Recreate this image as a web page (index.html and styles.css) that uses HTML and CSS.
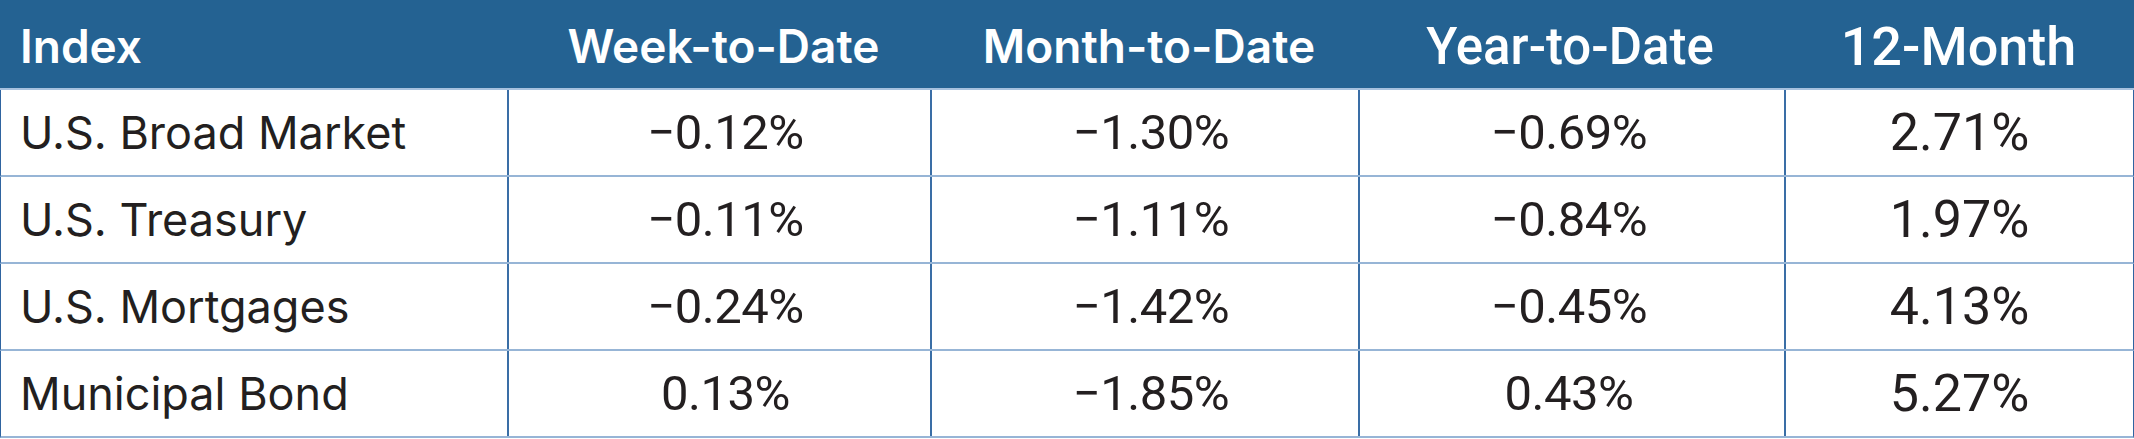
FILE: index.html
```html
<!DOCTYPE html>
<html lang="en">
<head>
<meta charset="utf-8">
<title>Index Returns</title>
<link rel="stylesheet" href="styles.css">
</head>
<body>
<div class="table">
  <div class="row head">
    <div class="cell first">Index</div>
    <div class="cell">Week-to-Date</div>
    <div class="cell">Month-to-Date</div>
    <div class="cell alt">Year-to-Date</div>
    <div class="cell alt big">12-Month</div>
  </div>
  <div class="row">
    <div class="cell first">U.S. Broad Market</div>
    <div class="cell num">−0.12%</div>
    <div class="cell num">−1.30%</div>
    <div class="cell num">−0.69%</div>
    <div class="cell num big">2.71%</div>
  </div>
  <div class="row">
    <div class="cell first">U.S. Treasury</div>
    <div class="cell num">−0.11%</div>
    <div class="cell num">−1.11%</div>
    <div class="cell num">−0.84%</div>
    <div class="cell num big">1.97%</div>
  </div>
  <div class="row">
    <div class="cell first">U.S. Mortgages</div>
    <div class="cell num">−0.24%</div>
    <div class="cell num">−1.42%</div>
    <div class="cell num">−0.45%</div>
    <div class="cell num big">4.13%</div>
  </div>
  <div class="row">
    <div class="cell first">Municipal Bond</div>
    <div class="cell num">0.13%</div>
    <div class="cell num">−1.85%</div>
    <div class="cell num">0.43%</div>
    <div class="cell num big">5.27%</div>
  </div>
</div>
</body>
</html>
```

FILE: styles.css
```css
html, body {
  margin: 0;
  padding: 0;
  background: #ffffff;
}

.table {
  width: 2134px;
  display: flex;
  flex-direction: column;
  font-family: "Inter", "Roboto", sans-serif;
  color: #231f20;
}

.row {
  display: grid;
  grid-template-columns: 506px 423px 428px 426px 1fr;
  height: 85px;
  border-bottom: 2px solid #97b5d6;
  border-left: 1px solid #2f64a0;
  border-right: 1px solid #2f64a0;
}

.row.head {
  height: 88px;
  background: #246292;
  color: #ffffff;
  border-left: none;
  border-right: none;
  border-bottom: 2px solid #a7c1de;
}

.cell {
  display: flex;
  align-items: center;
  justify-content: center;
  font-size: 45px;
  font-weight: 400;
  border-left: 2px solid #3a6ea6;
  white-space: nowrap;
}

.cell:nth-child(2),
.cell:nth-child(3) {
  padding-left: 12px;
}

.cell:nth-child(4) {
  padding-right: 6px;
}

.cell.first {
  justify-content: flex-start;
  padding-left: 19px;
  border-left: none;
}

.head .cell {
  font-weight: 600;
  font-size: 46px;
  border-left: none;
  padding-top: 4px;
}

.head .cell.first {
  padding-left: 20px;
}

.head .cell.alt {
  font-family: "Roboto", "Inter", sans-serif;
  font-weight: 500;
  font-size: 51px;
  padding-right: 0;
}

.head .cell.big {
  font-size: 54px;
}

.num {
  font-family: "Roboto", "Inter", sans-serif;
  font-size: 49px;
  letter-spacing: -0.5px;
}

.num.big {
  font-size: 52px;
  letter-spacing: 0;
}
```
